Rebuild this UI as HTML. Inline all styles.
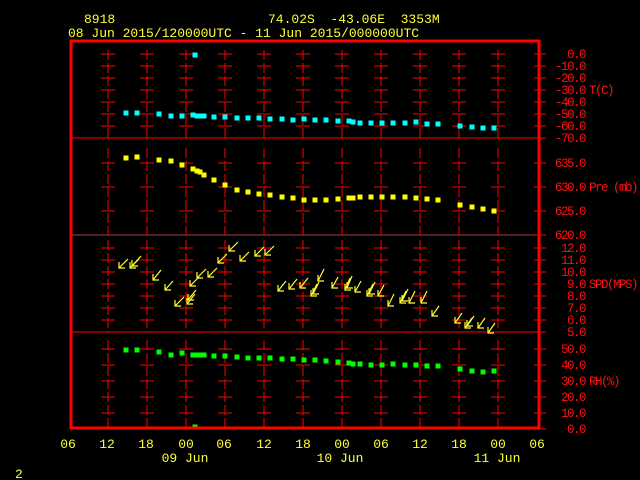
<!DOCTYPE html>
<html><head><meta charset="utf-8"><style>
html,body{margin:0;padding:0;background:#000;width:640px;height:480px;overflow:hidden}
svg{display:block}
text{font-family:"Liberation Mono",monospace;font-size:13px}
#lab text{font-size:12.5px;letter-spacing:-1.5px}
</style></head><body>
<svg id="s" width="640" height="480" xmlns="http://www.w3.org/2000/svg">
<g fill="#ffff33">
<text x="84" y="23">8918</text>
<text x="268" y="23" xml:space="preserve">74.02S  -43.06E  3353M</text>
<text x="68" y="37">08 Jun 2015/120000UTC - 11 Jun 2015/000000UTC</text>
<text x="15" y="478">2</text>
<g text-anchor="middle">
<text x="68" y="448">06</text><text x="107" y="448">12</text><text x="146" y="448">18</text><text x="186" y="448">00</text><text x="224" y="448">06</text><text x="264" y="448">12</text><text x="303" y="448">18</text><text x="342" y="448">00</text><text x="381" y="448">06</text><text x="420" y="448">12</text><text x="459" y="448">18</text><text x="498" y="448">00</text><text x="537" y="448">06</text>
<text x="185" y="462">09 Jun</text><text x="340" y="462">10 Jun</text><text x="497" y="462">11 Jun</text>
</g></g>
<g id="grid"></g>
<g fill="#ff1010" id="lab"></g>
<g id="pts"></g>
<g id="arr" stroke="#ffff33" stroke-width="1.2" fill="none"></g>
<rect x="71" y="41" width="468" height="387" fill="none" stroke="#ff0000" stroke-width="3"/>
</svg>
<script>
var NS="http://www.w3.org/2000/svg";
function el(p,t,a,txt){var e=document.createElementNS(NS,t);for(var k in a)e.setAttribute(k,a[k]);if(txt!=null)e.textContent=txt;document.getElementById(p).appendChild(e);return e;}
var R="#ff0000";
el("grid","line",{x1:71,y1:138,x2:546,y2:138,stroke:R,"stroke-width":1});
el("grid","line",{x1:71,y1:235,x2:546,y2:235,stroke:"#a04040","stroke-width":1});
el("grid","line",{x1:71,y1:332,x2:546,y2:332,stroke:R,"stroke-width":1});
var panels=[[50,138,[54,66,78,90,102,114,126]],[148,235,[163,187,211]],[240,332,[248,260,272,284,296,308,320]],[340,428,[349,365,381,397,413]]];
for(var k=0;k<11;k++){var x=108+39*k;
 panels.forEach(function(p){
  el("grid","line",{x1:x,y1:p[0],x2:x,y2:p[1],stroke:R,"stroke-width":1,"stroke-dasharray":"10,3"});
  p[2].forEach(function(y){el("grid","line",{x1:x-7,y1:y,x2:x+7,y2:y,stroke:R,"stroke-width":1});});
 });}
function rl(y,t){el("grid","line",{x1:534,y1:y,x2:546,y2:y,stroke:R,"stroke-width":1});el("lab","text",{x:585,y:y+4,"text-anchor":"end"},t);}
var tl=["0.0","-10.0","-20.0","-30.0","-40.0","-50.0","-60.0","-70.0"];tl.forEach(function(t,i){rl(54+12*i,t);});
rl(163,"635.0");rl(187,"630.0");rl(211,"625.0");rl(235,"620.0");
for(var i=12;i>=5;i--)rl(248+(12-i)*12,i+".0");
["50.0","40.0","30.0","20.0","10.0","0.0"].forEach(function(t,i){rl(349+16*i,t);});
el("lab","text",{x:589,y:94},"T(C)");el("lab","text",{x:589,y:191},"Pre (mb)");
el("lab","text",{x:589,y:288},"SPD(MPS)");el("lab","text",{x:589,y:385},"RH(%)");
var xs=[126,137,159,171,182,193,197,200,204,214,225,237,248,259,270,282,293,304,315,326,338,349,353,360,371,382,393,405,416,427,438,460,472,483,494];
var cy=[113,113,114,116,116,115,116,116,116,117,117,118,118,118,119,119,120,119,120,120,121,121,122,123,123,123,123,123,122,124,124,126,127,128,128];
var py=[158,157,160,161,165,169,171,172,175,180,185,190,192,194,195,197,198,200,200,200,199,198,198,197,197,197,197,197,198,199,200,205,207,209,211];
var gy=[350,350,352,355,353,355,355,355,355,356,356,357,358,358,358,359,359,360,360,361,362,363,364,364,365,365,364,365,365,366,366,369,371,372,371];
function sq(x,y,c){el("pts","rect",{x:x-2.5,y:y-2.5,width:5,height:5,fill:c});}
xs.forEach(function(x,i){sq(x,cy[i],"#00ffff");sq(x,py[i],"#ffff00");sq(x,gy[i],"#00ff00");});
sq(195,55,"#00ffff");sq(195,427,"#00ff00");
var A=[[119,268,9,-9],[130,268,9,-9],[132,266,9,-10],[153,280,8,-10],[165,290,8,-9],[175,306,9,-9],[187,304,8,-10],[188,300,8,-10],[190,286,9,-9],[197,278,9,-9],[208,277,9,-9],[218,263,9,-9],[229,251,9,-9],[240,261,9,-9],[255,256,9,-9],[265,255,9,-9],[278,291,8,-10],[289,289,8,-10],[300,288,8,-10],[311,296,6,-12],[313,294,6,-12],[318,281,6,-12],[332,288,6,-11],[345,290,5,-12],[347,288,5,-12],[355,292,6,-11],[367,296,6,-12],[369,294,6,-12],[378,296,6,-11],[388,306,6,-12],[400,303,6,-12],[402,301,6,-12],[409,303,6,-12],[421,303,6,-12],[432,316,7,-10],[455,323,7,-10],[465,328,7,-10],[467,326,7,-10],[478,328,7,-10],[488,333,7,-10]];
A.forEach(function(a){var x=a[0],y=a[1];el("arr","path",{d:"M"+x+" "+y+"l"+a[2]+" "+a[3]+"M"+x+" "+(y-6)+"V"+y+"h6"});});
</script>
</body></html>
